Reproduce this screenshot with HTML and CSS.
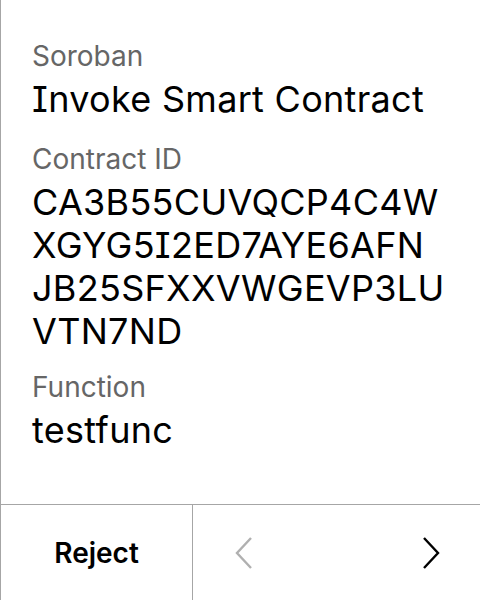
FILE: index.html
```html
<!DOCTYPE html>
<html>
<head>
<meta charset="utf-8">
<link rel="stylesheet" href="styles.css">
</head>
<body>
<div class="screen">
  <div class="content">
    <div class="field first">
      <div class="label">Soroban</div>
      <div class="value">Invoke Smart Contract</div>
    </div>
    <div class="field">
      <div class="label">Contract ID</div>
      <div class="value">CA3B55CUVQCP4C4W<br>XGYG5I2ED7AYE6AFN<br>JB25SFXXVWGEVP3LU<br>VTN7ND</div>
    </div>
    <div class="field">
      <div class="label">Function</div>
      <div class="value">testfunc</div>
    </div>
  </div>
  <div class="footer">
    <div class="reject">Reject</div>
    <div class="nav">
      <svg class="chev" width="18" height="32" viewBox="0 0 18 32"><path d="M16 1 L2 16 L16 31" fill="none" stroke="#b0b0b0" stroke-width="2.4"/></svg>
      <svg class="chev" width="18" height="32" viewBox="0 0 18 32"><path d="M2 1 L16 16 L2 31" fill="none" stroke="#000" stroke-width="2.4"/></svg>
    </div>
  </div>
</div>
</body>
</html>
```
FILE: styles.css
```css
html, body {
  margin: 0;
  padding: 0;
  background: #fff;
}
.screen {
  width: 480px;
  height: 600px;
  box-sizing: border-box;
  border-left: 1px solid #a6a6a6;
  display: flex;
  flex-direction: column;
  font-family: Inter, "Noto Sans", sans-serif;
  color: #000;
}
.content {
  flex: 1;
  padding: 39px 0 0 31px;
  display: flex;
  flex-direction: column;
  gap: 17px;
}
.field.first {
  margin-bottom: 4px;
}
.label {
  font-size: 28px;
  line-height: 34px;
  color: #666;
}
.value {
  font-size: 36px;
  line-height: 43px;
  letter-spacing: 0.3px;
  margin-top: 5px;
  font-feature-settings: "cv08";
}
.footer {
  height: 96px;
  box-sizing: border-box;
  border-top: 1px solid #a6a6a6;
  display: flex;
}
.reject {
  width: 191px;
  border-right: 1px solid #a6a6a6;
  display: flex;
  align-items: center;
  justify-content: center;
  font-size: 28px;
  font-weight: 600;
}
.nav {
  flex: 1;
  display: flex;
  align-items: center;
  justify-content: space-between;
  padding: 0 40px 0 42px;
}
.chev {
  display: block;
}
```
